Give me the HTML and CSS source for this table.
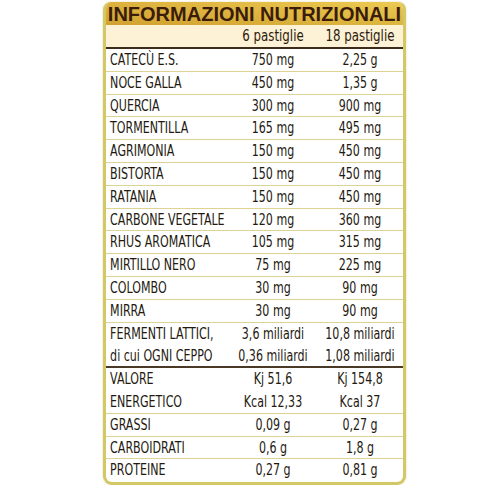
FILE: index.html
```html
<!DOCTYPE html>
<html>
<head>
    <title>Informazioni nutrizionali</title>
    <link rel="stylesheet" href="styles.css">
</head>
<body>
    <div class="card">
        <div class="head">INFORMAZIONI NUTRIZIONALI</div>
        <div class="row sub">
            <span></span><span>6 pastiglie</span><span>18 pastiglie</span>
        </div>

        <div class="rows">
            <div class="row"><span>CATECÙ E.S.</span><span>750 mg</span><span>2,25 g</span></div>
            <div class="row"><span>NOCE GALLA</span><span>450 mg</span><span>1,35 g</span></div>
            <div class="row"><span>QUERCIA</span><span>300 mg</span><span>900 mg</span></div>
            <div class="row"><span>TORMENTILLA</span><span>165 mg</span><span>495 mg</span></div>
            <div class="row"><span>AGRIMONIA</span><span>150 mg</span><span>450 mg</span></div>
            <div class="row"><span>BISTORTA</span><span>150 mg</span><span>450 mg</span></div>
            <div class="row"><span>RATANIA</span><span>150 mg</span><span>450 mg</span></div>
            <div class="row"><span>CARBONE VEGETALE</span><span>120 mg</span><span>360 mg</span></div>
            <div class="row"><span>RHUS AROMATICA</span><span>105 mg</span><span>315 mg</span></div>
            <div class="row"><span>MIRTILLO NERO</span><span>75 mg</span><span>225 mg</span></div>
            <div class="row"><span>COLOMBO</span><span>30 mg</span><span>90 mg</span></div>
            <div class="row"><span>MIRRA</span><span>30 mg</span><span>90 mg</span></div>
            <div class="row joined"><span>FERMENTI LATTICI,</span><span>3,6 miliardi</span><span>10,8 miliardi</span></div>
            <div class="row dark"><span>di cui OGNI CEPPO</span><span>0,36 miliardi</span><span>1,08 miliardi</span></div>
            <div class="row joined"><span>VALORE</span><span>Kj 51,6</span><span>Kj 154,8</span></div>
            <div class="row"><span>ENERGETICO</span><span>Kcal 12,33</span><span>Kcal 37</span></div>
            <div class="row"><span>GRASSI</span><span>0,09 g</span><span>0,27 g</span></div>
            <div class="row"><span>CARBOIDRATI</span><span>0,6 g</span><span>1,8 g</span></div>
            <div class="row last"><span>PROTEINE</span><span>0,27 g</span><span>0,81 g</span></div>
        </div>
    </div>
</body>
</html>
```

FILE: styles.css
```css
body {
    margin: 0;
    background: #fff;
    font-family: "DejaVu Sans Condensed", "Liberation Sans", sans-serif;
    color: #24190f;
}

.card {
    width: 297px;
    margin: 2px 0 0 103px;
    border: 3px solid #d3c866;
    border-top: none;
    border-radius: 8px 8px 9px 9px;
    box-shadow: 0 0 2px rgba(190, 170, 60, 0.5);
    overflow: hidden;
    background: #fff;
}

.head {
    height: 23px;
    line-height: 24px;
    background: linear-gradient(90deg, rgba(200, 140, 30, 0.35), rgba(255, 230, 90, 0.15)),
                linear-gradient(180deg, #e9c650 0%, #d6ad3a 100%);
    color: #3b1c0a;
    font-family: "Liberation Sans", sans-serif;
    font-weight: bold;
    font-size: 20px;
    text-align: center;
    letter-spacing: 0;
}

.row {
    display: grid;
    grid-template-columns: 123px 88px 86px;
    height: 22.8px;
    line-height: 22.8px;
    font-size: 15px;
    border-bottom: 1px solid #ddd494;
    box-sizing: border-box;
}

/* il testo originale è un carattere stretto */
.row span {
    text-align: center;
    white-space: nowrap;
    transform: scaleX(0.82);
}

.row span:first-child {
    text-align: left;
    padding-left: 5px;
    transform-origin: left center;
}

.sub {
    height: 24px;
    line-height: 22px;
    background: #fdf1d6;
    font-size: 16px;
    color: #2b1a0c;
    border-bottom: 2px solid #3e2c1a;
}

.row.joined {
    border-bottom-color: transparent;
}

.row.dark {
    border-bottom: 2px solid #4a3926;
}

.row.last {
    border-bottom: none;
}
```
